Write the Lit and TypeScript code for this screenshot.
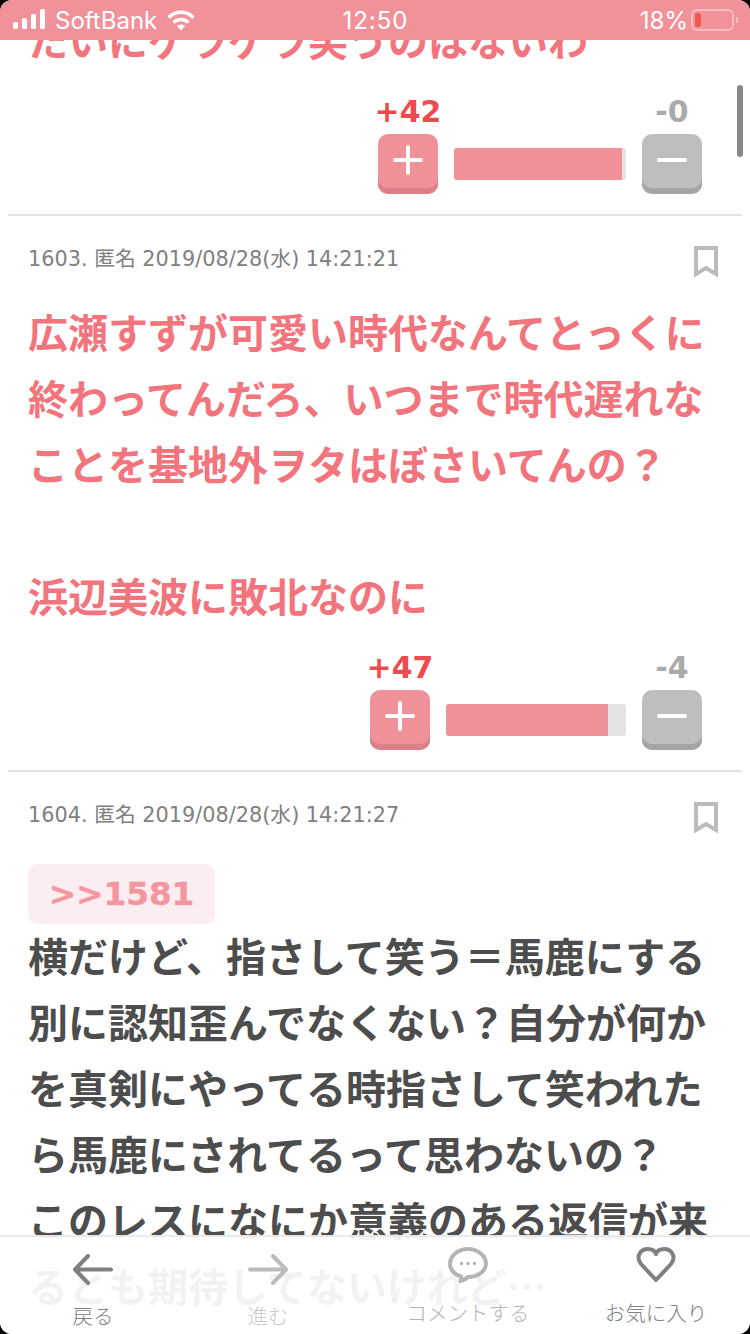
import { LitElement, html, css } from 'lit';
import { customElement } from 'lit/decorators.js';

const comments = [
  {
    meta: '',
    anchor: '',
    text: 'たいにゲラゲラ笑うのはないわ',
    tone: 'hot',
    plus: 42,
    minus: 0,
    barWidth: 172,
    fill: 97.7,
  },
  {
    meta: '1603. 匿名 2019/08/28(水) 14:21:21',
    anchor: '',
    text: '広瀬すずが可愛い時代なんてとっくに終わってんだろ、いつまで時代遅れなことを基地外ヲタはぼさいてんの？\n\n浜辺美波に敗北なのに',
    tone: 'hot',
    plus: 47,
    minus: 4,
    barWidth: 180,
    fill: 90,
  },
  {
    meta: '1604. 匿名 2019/08/28(水) 14:21:27',
    anchor: '>>1581',
    text: '横だけど、指さして笑う＝馬鹿にする別に認知歪んでなくない？自分が何かを真剣にやってる時指さして笑われたら馬鹿にされてるって思わないの？\nこのレスになにか意義のある返信が来るとも期待してないけれど…',
    tone: 'normal',
  },
];

@customElement('app-root')
export class AppRoot extends LitElement {
  static styles = css`
    :host {
      display: block;
      width: 750px;
      height: 1334px;
      background: #000;
      font-family: 'Noto Sans CJK JP', sans-serif;
    }

    .screen {
      position: relative;
      height: 1334px;
      overflow: hidden;
      border-radius: 12px;
      background: #fff;
    }

    .thread {
      padding-top: 8px;
    }

    .comment-head {
      display: flex;
      justify-content: space-between;
      align-items: flex-start;
      padding: 29px 32px 22px 28px;
    }

    .meta {
      font-family: 'DejaVu Sans', 'Noto Sans CJK JP', sans-serif;
      font-size: 20.8px;
      line-height: 28px;
      color: #808080;
    }

    .bookmark {
      display: block;
      margin-top: 1px;
    }

    .anchor {
      display: inline-block;
      margin: 8px 0 0 28px;
      padding: 0 21px;
      height: 60px;
      line-height: 60px;
      border-radius: 10px;
      background: #fcedf0;
      color: #f4969f;
      font-family: 'DejaVu Sans', sans-serif;
      font-size: 32.6px;
      font-weight: 700;
      -webkit-text-stroke: 0.4px #f4969f;
      vertical-align: top;
    }

    .body {
      margin: -2px 0 0;
      padding: 0 28px;
      font-size: 40px;
      font-weight: 700;
      line-height: 66px;
      white-space: pre-wrap;
    }

    .body.hot {
      color: #f2747c;
    }

    .body.normal {
      color: #4d4d4d;
    }

    .votes {
      display: flex;
      justify-content: flex-end;
      align-items: flex-end;
      gap: 16px;
      padding: 0 48px 20px 0;
      margin-top: 23px;
    }

    .vote {
      display: flex;
      flex-direction: column;
      align-items: center;
      width: 60px;
    }

    .count {
      font-family: 'DejaVu Sans', sans-serif;
      font-size: 30px;
      font-weight: 700;
      line-height: 34px;
      margin-bottom: 5px;
      white-space: nowrap;
    }

    .vote.up .count {
      color: #ef4a50;
    }

    .vote.down .count {
      color: #aaaaaa;
    }

    .btn {
      display: flex;
      align-items: center;
      justify-content: center;
      box-sizing: border-box;
      width: 60px;
      height: 60px;
      padding-bottom: 8px;
      border-radius: 10px;
    }

    .vote.up .btn {
      background: #f09199;
      box-shadow: inset 0 -6px 0 #db7f88;
    }

    .vote.down .btn {
      background: #bebebe;
      box-shadow: inset 0 -6px 0 #a5a5a5;
    }

    .bar {
      height: 32px;
      margin-bottom: 14px;
      border-radius: 3px;
      overflow: hidden;
      background: #e3e3e3;
    }

    .bar-fill {
      height: 100%;
      background: #f09199;
    }

    .divider {
      height: 2px;
      margin: 0 8px;
      background: #e3e3e3;
    }

    .status {
      position: absolute;
      top: 0;
      left: 0;
      right: 0;
      height: 40px;
      display: grid;
      grid-template-columns: 1fr auto 1fr;
      align-items: center;
      padding: 0 12px 0 13px;
      background: #f1929a;
      color: #fff;
      font-family: Inter, sans-serif;
      font-size: 24px;
    }

    .status-left {
      display: flex;
      align-items: center;
      gap: 10px;
    }

    .status-right {
      display: flex;
      justify-content: flex-end;
      align-items: center;
      gap: 3px;
    }

    .time {
      letter-spacing: 1px;
    }

    .scrollbar {
      position: absolute;
      top: 85px;
      right: 7px;
      width: 6px;
      height: 72px;
      border-radius: 3px;
      background: #888;
    }

    .nav {
      position: absolute;
      left: 0;
      right: 0;
      bottom: 0;
      height: 97px;
      display: grid;
      grid-template-columns: 186px 164px 236px 140px;
      border-top: 2px solid rgba(225, 225, 225, 0.7);
      background: rgba(255, 255, 255, 0.93);
    }

    .nav-item {
      display: flex;
      flex-direction: column;
      align-items: center;
      font-size: 20.5px;
      font-weight: 300;
      line-height: 28px;
    }

    .nav-item svg {
      display: block;
    }

    .nav-item.arrow {
      padding-top: 17px;
    }

    .nav-item.arrow span {
      margin-top: 16px;
    }

    .nav-item.round {
      padding-top: 10px;
    }

    .nav-item.round span {
      margin-top: 15px;
    }

    .strong {
      color: #808080;
    }

    .faint {
      color: #c8c8c8;
    }

    .soft {
      color: #b4b4b4;
    }
  `;

  private renderVotes(c: any) {
    return html`
      <div class="votes">
        <div class="vote up">
          <div class="count">+${c.plus}</div>
          <div class="btn">
            <svg width="30" height="30" viewBox="0 0 30 30">
              <path d="M15 2V28M2 15H28" stroke="#fff" stroke-width="4" stroke-linecap="round" fill="none"></path>
            </svg>
          </div>
        </div>
        <div class="bar" style="width:${c.barWidth}px">
          <div class="bar-fill" style="width:${c.fill}%"></div>
        </div>
        <div class="vote down">
          <div class="count">-${c.minus}</div>
          <div class="btn">
            <svg width="30" height="30" viewBox="0 0 30 30">
              <path d="M2 15H28" stroke="#fff" stroke-width="4" stroke-linecap="round" fill="none"></path>
            </svg>
          </div>
        </div>
      </div>
    `;
  }

  private renderComment(c: any) {
    return html`
      ${c.meta
        ? html`
            <div class="comment-head">
              <div class="meta">${c.meta}</div>
              <svg class="bookmark" width="24" height="32" viewBox="0 0 24 32">
                <path d="M2 2H22V28L12 22L2 28Z" stroke="#bbb" stroke-width="4" fill="none"></path>
              </svg>
            </div>
          `
        : ''}
      ${c.anchor ? html`<div class="anchor">${c.anchor}</div>` : ''}
      <p class="body ${c.tone}">${c.text}</p>
      ${c.plus !== undefined ? html`${this.renderVotes(c)}<div class="divider"></div>` : ''}
    `;
  }

  render() {
    return html`
      <div class="screen">
        <div class="thread">${comments.map((c) => this.renderComment(c))}</div>

        <div class="scrollbar"></div>

        <div class="status">
          <div class="status-left">
            <svg width="32" height="22" viewBox="0 0 32 22" fill="#fff">
              <rect x="0" y="13" width="5" height="7" rx="1.5"></rect>
              <rect x="9" y="9" width="5" height="11" rx="1.5"></rect>
              <rect x="18" y="5" width="5" height="15" rx="1.5"></rect>
              <rect x="27" y="0" width="5" height="20" rx="1.5"></rect>
            </svg>
            <span>SoftBank</span>
            <svg width="28" height="21" viewBox="0 0 28 21" fill="none" stroke="#fff" stroke-width="3.4">
              <path d="M1.5 7.5C8.5 .5 19.5 .5 26.5 7.5"></path>
              <path d="M6.5 12.5C10.5 8.5 17.5 8.5 21.5 12.5"></path>
              <path d="M10 16L14 20.5L18 16C16 14 12 14 10 16Z" fill="#fff" stroke="none"></path>
            </svg>
          </div>
          <div class="time">12:50</div>
          <div class="status-right">
            <span>18%</span>
            <svg width="47" height="22" viewBox="0 0 47 22">
              <rect x="1" y="1" width="41" height="20" rx="5" fill="none" stroke="#f8bcc1" stroke-width="2"></rect>
              <rect x="4" y="4" width="6" height="14" rx="2.5" fill="#f0584e"></rect>
              <rect x="45" y="8" width="2" height="6" rx="1" fill="#f8bcc1"></rect>
            </svg>
          </div>
        </div>

        <div class="nav">
          <div class="nav-item arrow strong">
            <svg width="40" height="31" viewBox="0 0 40 31" fill="none" stroke="#808080" stroke-width="4" stroke-linecap="round" stroke-linejoin="round">
              <path d="M38 15.5H2M15 2L2 15.5L15 29"></path>
            </svg>
            <span>戻る</span>
          </div>
          <div class="nav-item arrow faint">
            <svg width="40" height="31" viewBox="0 0 40 31" fill="none" stroke="#bbb" stroke-width="4" stroke-linecap="round" stroke-linejoin="round">
              <path d="M2 15.5H38M25 2L38 15.5L25 29"></path>
            </svg>
            <span>進む</span>
          </div>
          <div class="nav-item round soft">
            <svg width="40" height="36" viewBox="0 0 40 36" fill="none">
              <path d="M13 29.5C6 27 2 22.5 2 17C2 9 10 2 20 2C30 2 38 9 38 16.5C38 25 29 30 20 30C18 32 15 33.5 12.5 34C13.5 32.5 13.5 31 13 29.5Z" stroke="#b4b4b4" stroke-width="4" stroke-linejoin="round"></path>
              <circle cx="13.5" cy="16.5" r="1.7" fill="#b4b4b4"></circle>
              <circle cx="20" cy="16.5" r="1.7" fill="#b4b4b4"></circle>
              <circle cx="26.5" cy="16.5" r="1.7" fill="#b4b4b4"></circle>
            </svg>
            <span>コメントする</span>
          </div>
          <div class="nav-item round strong">
            <svg width="40" height="36" viewBox="0 0 40 36" fill="none">
              <path d="M20 33L5 17C-1 9 5 2 12 2C16 2 19 4 20 7C21 4 24 2 28 2C35 2 41 9 35 17Z" stroke="#808080" stroke-width="4" stroke-linejoin="round"></path>
            </svg>
            <span>お気に入り</span>
          </div>
        </div>
      </div>
    `;
  }
}
